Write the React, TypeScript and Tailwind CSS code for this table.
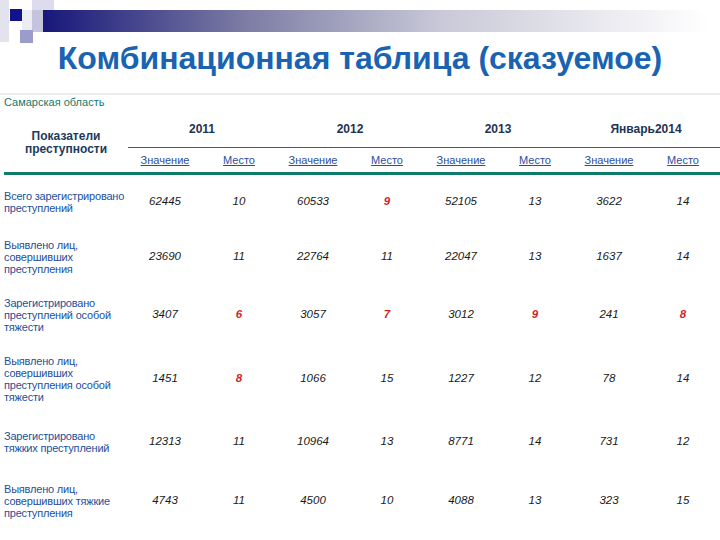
import React from "react";

type Cell = { v: string; red?: boolean };

interface Row {
  label: string[];
  h: string;
  cells: Cell[];
}

const c = (v: string, red = false): Cell => ({ v, red });

const rows: Row[] = [
  {
    label: ["Всего зарегистрировано", "преступлений"],
    h: "h-[53px]",
    cells: [c("62445"), c("10"), c("60533"), c("9", true), c("52105"), c("13"), c("3622"), c("14")],
  },
  {
    label: ["Выявлено лиц,", "совершивших", "преступления"],
    h: "h-[57px]",
    cells: [c("23690"), c("11"), c("22764"), c("11"), c("22047"), c("13"), c("1637"), c("14")],
  },
  {
    label: ["Зарегистрировано", "преступлений особой", "тяжести"],
    h: "h-[60px]",
    cells: [c("3407"), c("6", true), c("3057"), c("7", true), c("3012"), c("9", true), c("241"), c("8", true)],
  },
  {
    label: ["Выявлено лиц,", "совершивших", "преступления особой", "тяжести"],
    h: "h-[67px]",
    cells: [c("1451"), c("8", true), c("1066"), c("15"), c("1227"), c("12"), c("78"), c("14")],
  },
  {
    label: ["Зарегистрировано", "тяжких преступлений"],
    h: "h-[60px]",
    cells: [c("12313"), c("11"), c("10964"), c("13"), c("8771"), c("14"), c("731"), c("12")],
  },
  {
    label: ["Выявлено лиц,", "совершивших тяжкие", "преступления"],
    h: "h-[57px]",
    cells: [c("4743"), c("11"), c("4500"), c("10"), c("4088"), c("13"), c("323"), c("15")],
  },
];

const years = ["2011", "2012", "2013", "Январь2014"];

function Decoration() {
  return (
    <svg className="absolute left-0 top-0" width="720" height="45" viewBox="0 0 720 45">
      <defs>
        <linearGradient id="bar" x1="0" x2="1" y1="0" y2="0">
          <stop offset="0" stopColor="#17177a" />
          <stop offset="0.3" stopColor="#7b7ba4" />
          <stop offset="0.6" stopColor="#c9c9d8" />
          <stop offset="1" stopColor="#ffffff" />
        </linearGradient>
      </defs>
      <rect x="0" y="0" width="9" height="42" fill="#e3e3ee" />
      <rect x="32" y="0" width="22" height="10" fill="#dcdcec" />
      <rect x="22" y="10" width="10" height="20" fill="#ececf4" />
      <rect x="32" y="10" width="11" height="22" fill="#c4c4dc" />
      <rect x="43" y="10" width="665" height="22" fill="url(#bar)" />
      <rect x="10" y="9" width="12" height="12" fill="#12128a" />
      <rect x="20" y="30" width="13" height="13" fill="#9c9ccc" />
    </svg>
  );
}

export default function App() {
  return (
    <div className="relative w-[720px] h-[540px] overflow-hidden bg-white font-['Liberation_Sans',Arial,sans-serif]">
      <div className="relative h-[95px] border-b-2 border-[#ececec]">
        <Decoration />
        <h1 className="relative pt-[39px] text-center text-[32px] leading-[38px] font-bold text-[#1a63b3]">
          Комбинационная таблица (сказуемое)
        </h1>
      </div>

      <div className="pl-[4px] h-[14px] text-[11px] leading-[14px] text-[#16796c]">Самарская область</div>

      <div className="ml-[4px] w-[716px]">
        <div className="grid grid-cols-[124px_repeat(8,minmax(0,1fr))] border-b-[3px] border-[#0f7b69]">
          <div className="row-span-2 flex flex-col items-center justify-center pt-[4px] text-[12px] leading-[13px] font-bold text-[#1c3b5b]">
            <span>Показатели</span>
            <span>преступности</span>
          </div>
          {years.map((y) => (
            <div
              key={y}
              className="col-span-2 flex h-[39px] items-center justify-center border-b border-[#2f6b66] pt-[1px] text-[12px] font-bold text-[#1d3352]"
            >
              {y}
            </div>
          ))}
          {years.map((y) => (
            <React.Fragment key={y + "s"}>
              <div className="flex h-[24px] items-center justify-center text-[11px] text-[#2d4e9c] underline">Значение</div>
              <div className="flex h-[24px] items-center justify-center text-[11px] text-[#2d4e9c] underline">Место</div>
            </React.Fragment>
          ))}
        </div>

        {rows.map((r, i) => (
          <div key={i} className={`grid grid-cols-[124px_repeat(8,minmax(0,1fr))] items-center ${r.h}`}>
            <div className="flex flex-col whitespace-nowrap text-[11px] leading-[12px] tracking-[-0.2px] text-[#22509a]">
              {r.label.map((l) => (
                <span key={l}>{l}</span>
              ))}
            </div>
            {r.cells.map((cell, j) => (
              <div
                key={j}
                className={
                  cell.red
                    ? "text-center text-[11.5px] italic font-bold text-[#d01f1f]"
                    : "text-center text-[11.5px] italic text-[#1a1a1a]"
                }
              >
                {cell.v}
              </div>
            ))}
          </div>
        ))}
      </div>
    </div>
  );
}
